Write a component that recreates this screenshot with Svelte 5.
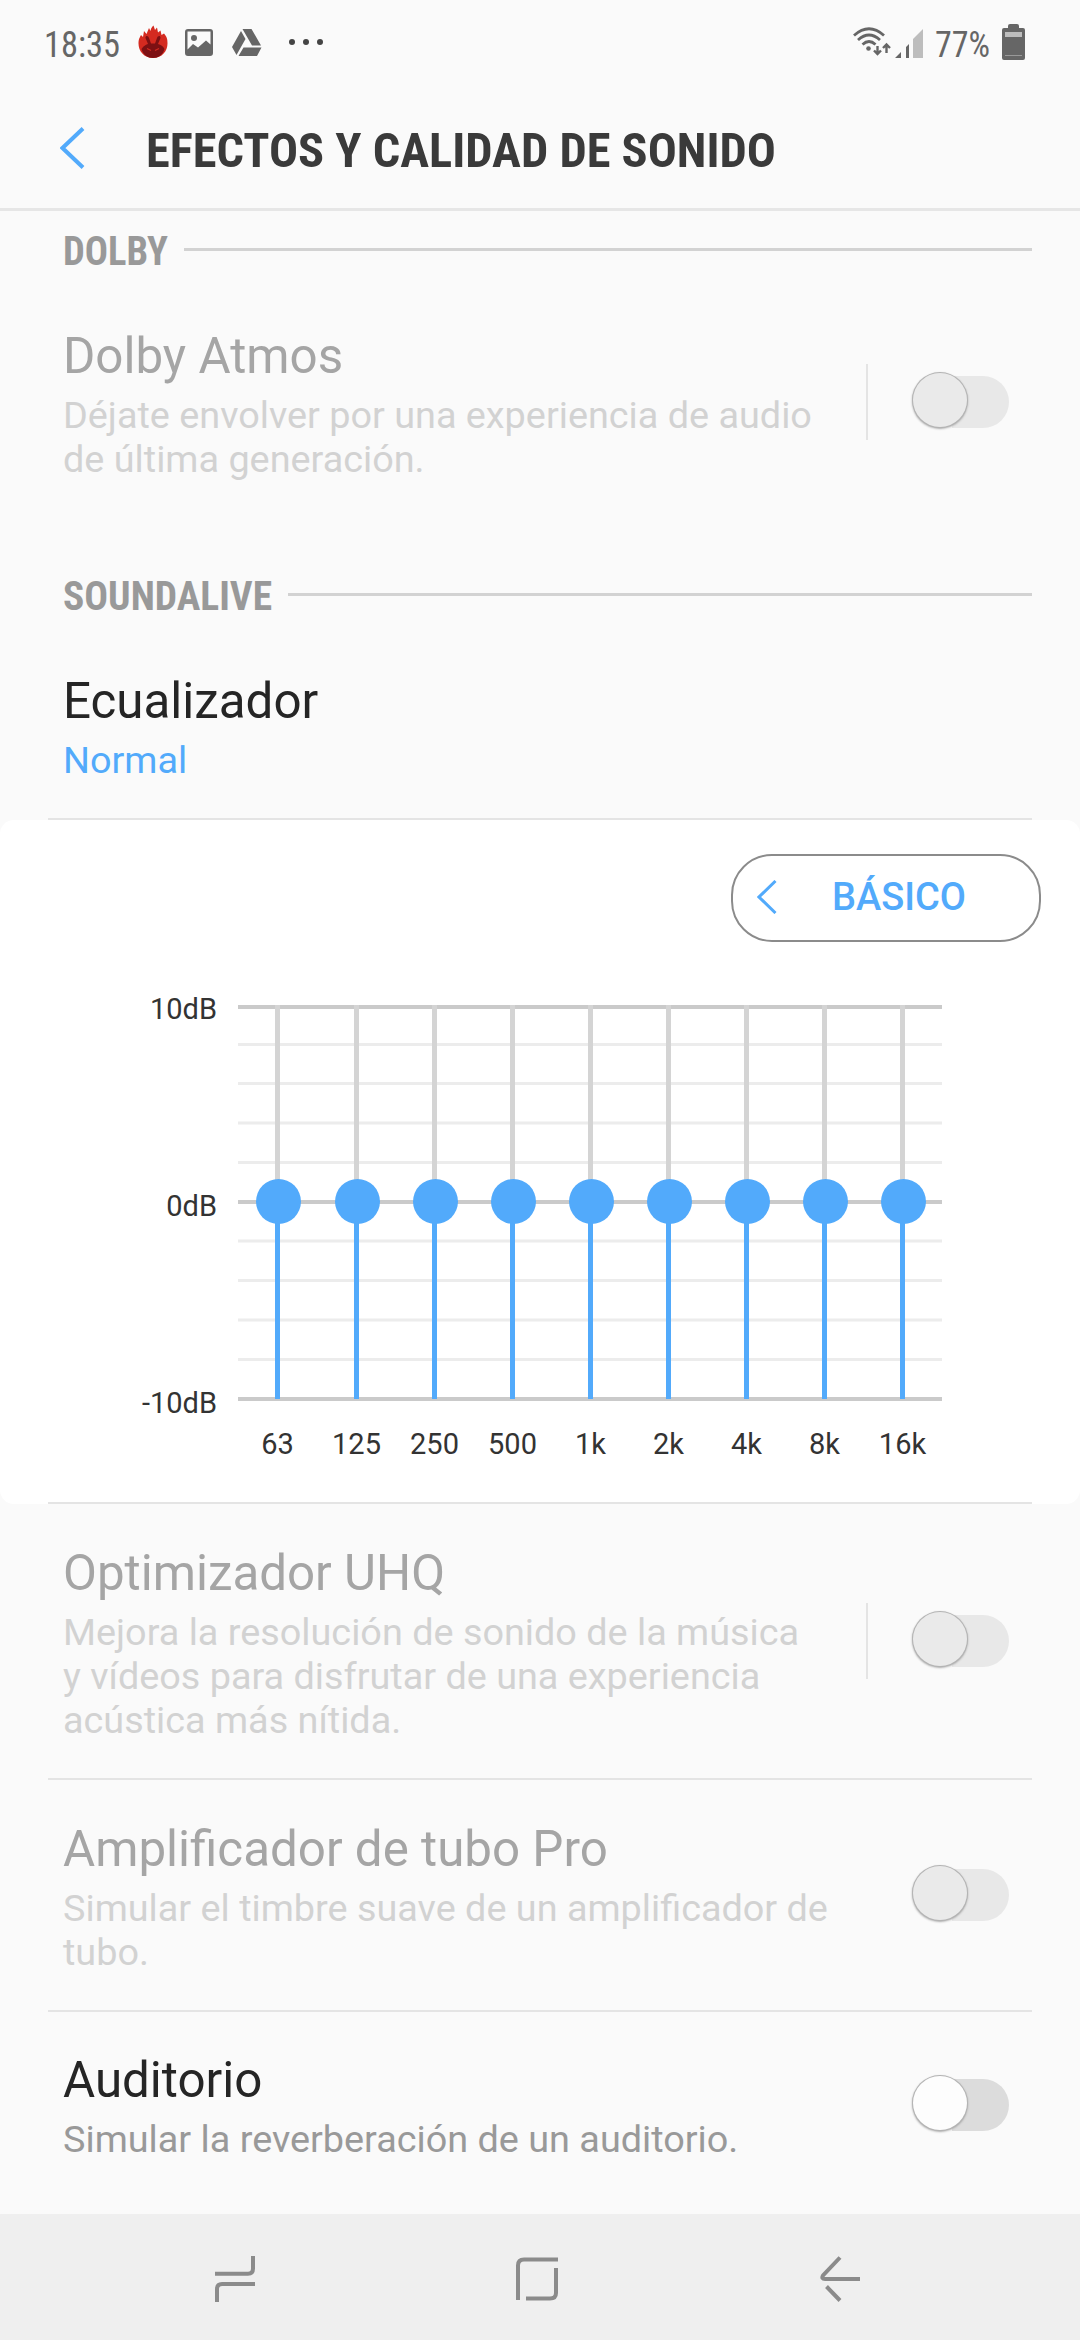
<script lang="ts">
  type Row = { title: string; desc: string[]; height: number; separator?: boolean; disabled?: boolean };

  const bands = ["63", "125", "250", "500", "1k", "2k", "4k", "8k", "16k"];
  const trackX = [275, 354, 432, 510, 588, 666, 744, 822, 900];
  const minorLines = [223, 262, 301.5, 341, 419.5, 459, 498.5, 538];
  const levels = [
    { label: "10dB", line: 185, text: 199 },
    { label: "0dB", line: 380, text: 396 },
    { label: "-10dB", line: 577, text: 593 },
  ];

  const rows: Row[] = [
    {
      title: "Optimizador UHQ",
      desc: ["Mejora la resolución de sonido de la música", "y vídeos para disfrutar de una experiencia", "acústica más nítida."],
      height: 276,
      separator: true,
      disabled: true,
    },
    {
      title: "Amplificador de tubo Pro",
      desc: ["Simular el timbre suave de un amplificador de", "tubo."],
      height: 232,
      disabled: true,
    },
    { title: "Auditorio", desc: ["Simular la reverberación de un auditorio."], height: 202 },
  ];
</script>

{#snippet condensed(text: string, width: number, size: number, cls: string)}
  <svg class="condensed {cls}" width={width} height={size}>
    <text x="0" y={size * 0.85} font-size={size} textLength={width} lengthAdjust="spacingAndGlyphs">{text}</text>
  </svg>
{/snippet}

{#snippet toggle(disabled: boolean)}
  <span class="toggle" class:disabled><span class="knob"></span></span>
{/snippet}

<div class="screen">
  <div class="status">
    {@render condensed("18:35", 76, 36, "time")}
    <svg class="antutu" width="30" height="34" viewBox="0 0 30 34">
      <path fill="#d42a20" d="M15 33C6 33 .5 26 .5 18.500C.5 14 2 12 3 10L5 12L6 6L8.500 9L11 3L12.500 6C13 3 14 2 15.500 .5L17 5L19 2.500L20 7.500L22.500 5.500L23.500 10L26 8.500C29 12 29.500 14 29.500 18.500C29.500 26 24 33 15 33Z" />
      <path fill="#7d1013" d="M3.500 24C6 20 10 19 10 19L7.500 13C7.500 10 10.500 11 11 13L13 18.500H17L19 13C19.500 11 22.500 10 22.500 13L20 19C23 20 25 21 26.500 24C25 30 20 33 15 33C10 33 5 30 3.500 24Z" />
      <path fill="none" stroke="#d42a20" stroke-width="1.200" d="M9 23.500L13 25.500M21 23.500L17 25.500" />
    </svg>
    <svg class="photo" width="28" height="27" viewBox="0 0 28 27">
      <path fill="#666" fill-rule="evenodd" d="M3 0H25Q28 0 28 3V24Q28 27 25 27H3Q0 27 0 24V3Q0 0 3 0ZM2.500 2.500V20.500L8 15L13 18.500L21 11.500L25.500 15.500V2.500Z" />
      <circle cx="9" cy="9" r="3" fill="#666" />
    </svg>
    <svg class="drive" width="30" height="27" viewBox="0 0 30 27">
      <path fill="#666" d="M10.500 0H19.500L29 16.500H20ZM9 2L13.500 10L4.500 26L0 18ZM11.500 18.500H29.500L25 27H6.500Z" />
    </svg>
    <svg class="more" width="36" height="6"><circle cx="3" cy="3" r="3" /><circle cx="17" cy="3" r="3" /><circle cx="31" cy="3" r="3" /></svg>
    <svg class="wifi" width="38" height="30" viewBox="0 0 38 30">
      <g fill="none" stroke="#666" stroke-width="2.800">
        <path d="M1 8.500Q16 -5 31 8.500M5 13Q16 3 27 13M9.500 17.500Q16 11.500 22.500 17.500" />
        <path stroke-width="2.400" d="M24.500 19V27M21 23.500L24.500 27L28 23.500M33.500 26V17.500M30 21L33.500 17.500L37 21" />
      </g>
      <circle cx="15.500" cy="21.500" r="2.300" fill="#666" />
    </svg>
    <svg class="signal" width="28" height="29" viewBox="0 0 28 29">
      <path fill="#666" d="M0 29L6 23V29ZM11 18L14 15V29H11Z" />
      <path fill="#bdbdbd" d="M18 10L28 0V29H18Z" />
    </svg>
    {@render condensed("77%", 55, 36, "percent")}
    <svg class="battery" width="23" height="36" viewBox="0 0 23 36">
      <path fill="#666" d="M8 0H15Q17 0 17 2V4H21Q23 4 23 6V34Q23 36 21 36H2Q0 36 0 34V6Q0 4 2 4H6V2Q6 0 8 0Z" />
      <path fill="#bdbdbd" d="M3 8H20V13H3Z" />
      <path fill="#999" d="M3 31H20V32H3Z" />
    </svg>
  </div>

  <header>
    <svg class="back" width="25" height="42" viewBox="0 0 25 42"><path d="M23 1.500L2.500 21L23 40.500" /></svg>
    {@render condensed("EFECTOS Y CALIDAD DE SONIDO", 630, 49, "heading")}
  </header>

  <div class="section">
    {@render condensed("DOLBY", 105, 40, "label")}
    <span class="rule"></span>
  </div>
  <div class="row dolby disabled">
    <div class="text">
      <div class="title">Dolby Atmos</div>
      <div class="desc"><div>Déjate envolver por una experiencia de audio</div><div>de última generación.</div></div>
    </div>
    <span class="separator"></span>
    {@render toggle(true)}
  </div>

  <div class="section">
    {@render condensed("SOUNDALIVE", 209, 40, "label")}
    <span class="rule"></span>
  </div>
  <div class="row equalizer">
    <div class="text">
      <div class="title">Ecualizador</div>
      <div class="desc value">Normal</div>
    </div>
  </div>

  <div class="panel">
    <button class="basic">
      <svg width="20" height="34" viewBox="0 0 20 34"><path d="M18.500 1L2 17L18.500 33" /></svg>
      <span>BÁSICO</span>
    </button>
    <svg class="chart" width="1080" height="560" viewBox="0 122 1080 560">
      {#each minorLines as y}
        <rect class="minor" x="238" {y} width="704" height="3" />
      {/each}
      {#each levels as level}
        <rect class="major" x="238" y={level.line} width="704" height="4" />
        <text x="217" y={level.text} text-anchor="end">{level.label}</text>
      {/each}
      {#each bands as band, i}
        <rect class="track" x={trackX[i]} y="185" width="5" height="196" />
        <rect class="fill" x={trackX[i]} y="381" width="5" height="198" />
        <circle class="fill" cx={trackX[i] + 3.5} cy="381.500" r="22.500" />
        <text x={trackX[i] + 2.5} y="634" text-anchor="middle">{band}</text>
      {/each}
    </svg>
  </div>

  {#each rows as row}
    <div class="row" class:disabled={row.disabled} style:height={`${row.height}px`}>
      <div class="text">
        <div class="title">{row.title}</div>
        <div class="desc">
          {#each row.desc as line}<div>{line}</div>{/each}
        </div>
      </div>
      {#if row.separator}<span class="separator"></span>{/if}
      {@render toggle(!!row.disabled)}
    </div>
  {/each}

  <nav>
    <svg width="42" height="48" viewBox="0 0 42 48"><path d="M0 18.700H33Q38 18.700 38 13.500V1M2 47V34Q2 29 7 29H40" /></svg>
    <svg class="home" width="42" height="44" viewBox="0 0 42 44"><path d="M2 43V8.500Q2 2.500 8 2.500H42M40 11V36Q40 41.500 34 41.500H10" /></svg>
    <svg width="42" height="46" viewBox="0 0 42 46"><path d="M20 1.500L3 19.500Q1 23 5 23H40M6.500 30.500L20 44.500" /></svg>
  </nav>
</div>

<style>
  :global(body) {
    margin: 0;
    background: #fafafa;
  }

  .screen {
    width: 1080px;
    height: 2340px;
    overflow: hidden;
    display: flex;
    flex-direction: column;
    background: #fafafa;
    font-family: Roboto, sans-serif;
    color: #252525;
  }

  svg {
    display: block;
    flex: none;
  }

  .condensed {
    overflow: visible;
    font-family: "Roboto Condensed", Roboto, sans-serif;
    font-stretch: 75%;
  }

  .status {
    height: 88px;
    box-sizing: border-box;
    padding: 0 55px 4px 44px;
    display: flex;
    align-items: center;
    fill: #666;
  }

  .time,
  .percent { margin-top: 3px; }
  .antutu { margin-left: 18px; }
  .photo { margin-left: 17px; }
  .drive { margin-left: 19px; }
  .more { margin-left: 27px; fill: #444; }
  .wifi { margin-left: auto; }
  .signal { margin: 2px 12px 0 4px; }
  .battery { margin-left: 12px; }

  header {
    height: 120px;
    border-bottom: 3px solid #e6e6e6;
    display: flex;
    align-items: center;
    padding: 0 0 0 60px;
    fill: #3a3a3a;
    font-weight: 700;
  }

  .heading {
    margin-top: 3px;
  }

  .back {
    margin-right: 61px;
  }

  .back path,
  .basic path {
    fill: none;
    stroke: #52aafb;
    stroke-width: 4;
  }

  .basic path {
    stroke-width: 3;
  }

  .section {
    height: 80px;
    padding: 0 48px 0 63px;
    display: flex;
    align-items: center;
    gap: 16px;
    fill: #999;
    font-weight: 700;
  }

  .rule {
    flex: 1;
    height: 3px;
    margin-bottom: 3px;
    background: #d2d2d2;
  }

  .row {
    box-sizing: border-box;
    margin: 0 48px;
    padding: 0 23px 0 15px;
    border-bottom: 2px solid #e4e4e4;
    display: flex;
    align-items: center;
    flex: none;
  }

  .row:nth-last-child(2) {
    padding-bottom: 17px;
    border-bottom: none;
  }

  .text {
    flex: 1;
    padding-top: 2px;
    white-space: nowrap;
  }

  .title {
    font-size: 49.3px;
    line-height: 60px;
  }

  .desc {
    margin-top: 7px;
    font-size: 37.8px;
    line-height: 44px;
    color: #999;
  }

  .disabled .title {
    color: #a5a5a5;
  }

  .disabled .desc {
    color: #d2d2d2;
  }

  .dolby {
    height: 265px;
    padding-bottom: 43px;
    border: none;
  }

  .equalizer {
    height: 184px;
    padding-bottom: 4px;
  }

  .desc.value {
    color: #52aafb;
  }

  .separator {
    width: 2px;
    height: 76px;
    margin-right: 44px;
    background: #e4e4e4;
  }

  .toggle {
    width: 97px;
    height: 52px;
    border-radius: 26px;
    background: linear-gradient(90deg, transparent 40px, #dcdcdc 40px);
    display: flex;
    align-items: center;
  }

  .toggle.disabled {
    background: linear-gradient(90deg, transparent 40px, #e8e8e8 40px);
  }

  .knob {
    width: 54px;
    height: 54px;
    margin: -4px 0 0 1px;
    border-radius: 50%;
    background: #fdfdfd;
    box-shadow: 0 0 0 1px #b4b4b4, 0 1px 2px 1px #aaa;
  }

  .disabled .knob {
    background: #eaeaea;
  }

  .panel {
    height: 684px;
    flex: none;
    background: #fff;
    border-radius: 14px;
    display: flex;
    flex-direction: column;
  }

  .panel::after {
    content: "";
    height: 2px;
    margin: 0 48px;
    background: #e4e4e4;
  }

  .basic {
    align-self: flex-end;
    box-sizing: border-box;
    flex: none;
    width: 310px;
    height: 88px;
    margin: 34px 39px 0 0;
    padding: 0 0 2px 24px;
    border: 2px solid #8b8b8b;
    border-radius: 41px;
    background: #fff;
    color: #52aafb;
    font: 500 38px Roboto, sans-serif;
    display: flex;
    align-items: center;
    gap: 55px;
  }

  .chart {
    font-size: 29px;
  }

  .chart text { fill: #333; }
  .minor { fill: #ececec; }
  .major { fill: #cacaca; }
  .track { fill: #d4d4d4; }
  .fill { fill: #52aafb; }

  nav {
    flex: 1;
    background: #efefef;
    display: flex;
    align-items: center;
    justify-content: space-between;
    padding: 4px 218px 0 215px;
  }

  .home {
    margin-right: 3px;
  }

  nav path {
    fill: none;
    stroke: #8b8b8b;
    stroke-width: 4;
  }
</style>
